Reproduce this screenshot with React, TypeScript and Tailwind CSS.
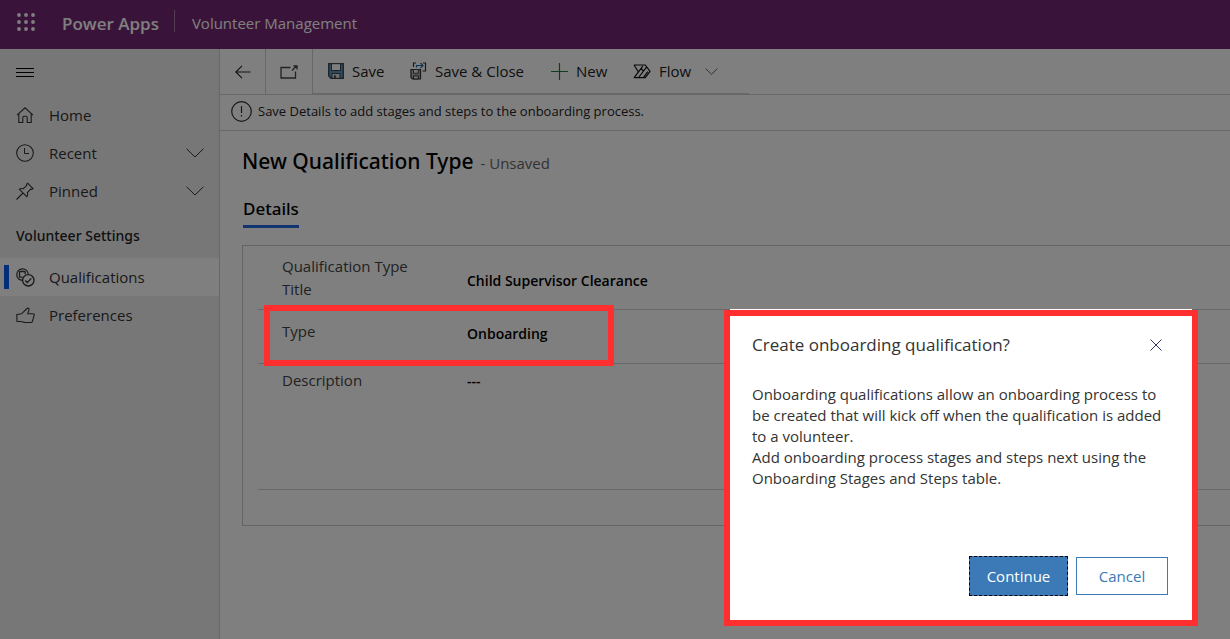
import React from "react";

type IconProps = { className?: string };

const WaffleIcon = () => (
  <svg width="18" height="18" viewBox="0 0 18 18" fill="currentColor" aria-hidden="true">
    {[2, 9, 16].map((y) =>
      [2, 9, 16].map((x) => <circle key={`${x}-${y}`} cx={x} cy={y} r="1.9" />)
    )}
  </svg>
);

const MenuIcon = () => (
  <svg width="18" height="11" viewBox="0 0 18 11" stroke="currentColor" aria-hidden="true">
    <path d="M0 1.5h18M0 5.5h18M0 9.5h18" />
  </svg>
);

const HomeIcon = () => (
  <svg width="18" height="18" viewBox="0 0 18 18" fill="none" stroke="currentColor" aria-hidden="true">
    <path d="M1 9.2 9 1.8l8 7.4M2.8 7.8v8.7h4v-5c0-.8.5-1.3 1.3-1.3h1.8c.8 0 1.3.5 1.3 1.3v5h4V7.8" strokeWidth="1.1" />
  </svg>
);

const ClockIcon = () => (
  <svg width="18" height="18" viewBox="0 0 18 18" fill="none" stroke="currentColor" aria-hidden="true">
    <circle cx="9" cy="9" r="8.3" strokeWidth="1.1" />
    <path d="M8.5 4v5.5H13" />
  </svg>
);

const PinIcon = () => (
  <svg width="18" height="18" viewBox="0 0 18 18" fill="none" stroke="currentColor" aria-hidden="true">
    <path d="M11.6 1.2 17 6.6l-1.4.8-.9-.2-3.3 3.5c.5 1.4.3 2.9-.6 4L3.4 7.3c1.2-.9 2.6-1 4-.6l3.4-3.3-.2-1ZM7 11 .5 17.5" strokeWidth="1.1" />
  </svg>
);

const ChevronIcon = ({ className }: IconProps) => (
  <svg className={className} viewBox="0 0 18 10" fill="none" stroke="currentColor" aria-hidden="true">
    <path d="m.5.7 8.5 8.3L17.5.7" />
  </svg>
);

const QualificationsIcon = () => (
  <svg width="19" height="19" viewBox="0 0 19 19" fill="none" stroke="currentColor" aria-hidden="true">
    <path d="M6.6 12.4A5.8 5.8 0 1 1 12.3 6.5" strokeWidth="1.2" />
    <path d="M6.5 9.2H4.2c-.4 0-.7-.3-.7-.7V4.2c0-.4.3-.7.7-.7h4.3c.4 0 .7.3.7.7v2" strokeWidth="1.3" />
    <circle cx="12.3" cy="12.3" r="5.7" strokeWidth="1.3" />
    <path d="m9.3 12.5 2 2 4-4.1" strokeWidth="1.3" />
  </svg>
);

const ThumbIcon = () => (
  <svg width="19" height="17" viewBox="0 0 19 17" fill="none" stroke="currentColor" aria-hidden="true">
    <path d="M.8 7.5 5.5 6.8 11 1.5c1-.9 2.3-.1 2 1.2L11.8 6.7h5.3c.9 0 1.3.6 1.1 1.4l-1.8 6.2c-.2.8-.8 1.2-1.6 1.2H9c-1.5 0-2.5-1-4-1H1Z" strokeWidth="1.1" />
  </svg>
);

const BackIcon = () => (
  <svg width="16" height="14" viewBox="0 0 16 14" fill="none" stroke="currentColor" aria-hidden="true">
    <path d="M15.5 7H1M7 .8.8 7 7 13.2" strokeWidth="1.1" />
  </svg>
);

const PopOutIcon = () => (
  <svg width="18" height="14" viewBox="0 0 18 14" fill="none" stroke="#444" aria-hidden="true">
    <path d="M10.5 2.5H1V13h14.500V6.500" strokeWidth="1.3" />
    <path d="m12 5.5 4.500-4.500M13.500 1H17v3.500" strokeWidth="1.3" />
  </svg>
);

const SaveIcon = () => (
  <svg width="16" height="16" viewBox="0 0 16 16" aria-hidden="true">
    <path d="M.7.7h14.6v14.6H3L.7 13Z" fill="#5f93bd" stroke="#3b444e" strokeWidth="1.3" />
    <path d="M3.5.7h9v6.8h-9Z" fill="#fff" stroke="#3b444e" />
    <path d="M4 10.5h8v4.8H4Z" fill="#ddd" stroke="#3b444e" />
    <path d="M6 12.3h1.8v3H6Z" fill="#3b444e" />
  </svg>
);

const SaveCloseIcon = () => (
  <svg width="17" height="18" viewBox="0 0 17 18" fill="none" aria-hidden="true">
    <path d="M6 1H3.5v4M13 1h2.5v8h-3" stroke="#333" strokeWidth="1.2" />
    <path d="M6.5 5.5v-2h6M10.5 1 13 3.5 10.5 6" stroke="#1f6fae" strokeWidth="1.2" />
    <path d="M1 7.5h9.5V17h-8L1 15.5Z" fill="#a9b2ba" stroke="#333" strokeWidth="1.2" />
    <path d="M3.5 7.5h4.8v3.8H3.5Z" fill="#e8e8e8" stroke="#444" />
    <path d="M3.5 13.8h4.8V17H3.5Z" fill="#ddd" stroke="#333" />
  </svg>
);

const PlusIcon = () => (
  <svg width="17" height="17" viewBox="0 0 17 17" stroke="#1f7a42" aria-hidden="true">
    <path d="M0 8.5h17M8.5 0v17" strokeWidth="1.2" />
  </svg>
);

const FlowIcon = () => (
  <svg width="18" height="15" viewBox="0 0 18 15" fill="none" stroke="#111" strokeLinejoin="round" aria-hidden="true">
    <path d="M1 1h11.3L17 7.3l-4.7 6.3H1.2L9.8 2.2M1 1l4.3 6.8M5.6 13.5l7.9-10.3M8.3 4.3l2.2 3M10.5 13.3l4.3-5.6" strokeWidth="1.2" />
  </svg>
);

const InfoIcon = () => (
  <svg width="21" height="21" viewBox="0 0 21 21" fill="none" stroke="#333" aria-hidden="true">
    <circle cx="10.5" cy="10.5" r="9.8" strokeWidth="1.2" />
    <path d="M10.5 5v7M10.5 14v1.5" strokeWidth="1.2" />
  </svg>
);

const CloseIcon = () => (
  <svg width="12" height="12" viewBox="0 0 12 12" stroke="currentColor" aria-hidden="true">
    <path d="m.5.5 11 11M11.5.5l-11 11" />
  </svg>
);

function NavItem({ icon, label, expandable, active }: { icon: React.ReactNode; label: string; expandable?: boolean; active?: boolean }) {
  return (
    <a
      href="#"
      className={`relative flex h-[38px] items-center pr-[15px] pl-4 text-[15px] text-[#333] ${active ? "bg-white" : ""}`}
    >
      {active && <span className="absolute top-[7px] left-1 h-6 w-[5px] bg-[#0b5cf0]" />}
      <span className="flex w-[33px] items-center">{icon}</span>
      <span className="flex-1">{label}</span>
      {expandable && <ChevronIcon className="h-[10px] w-[18px]" />}
    </a>
  );
}

function Sidebar() {
  return (
    <nav className="w-[220px] shrink-0 border-r border-[#d0d0d0] bg-[#efefef]">
      <button aria-label="Toggle navigation" className="flex h-[47px] items-center px-4 text-black">
        <MenuIcon />
      </button>
      <NavItem icon={<HomeIcon />} label="Home" />
      <NavItem icon={<ClockIcon />} label="Recent" expandable />
      <NavItem icon={<PinIcon />} label="Pinned" expandable />
      <h2 className="flex h-12 items-center px-4 pt-[2px] font-['Noto_Sans',sans-serif] text-[14px] font-medium text-[#222]">Volunteer Settings</h2>
      <NavItem icon={<QualificationsIcon />} label="Qualifications" active />
      <NavItem icon={<ThumbIcon />} label="Preferences" />
    </nav>
  );
}

function CommandBar() {
  return (
    <div className="flex h-[46px] border-b border-[#d0d0d0] text-[15px] text-[#222]">
      <button aria-label="Back" className="flex w-[46px] items-center justify-center border-r border-[#d0d0d0]">
        <BackIcon />
      </button>
      <button aria-label="Open in new window" className="flex w-[47px] items-center justify-center border-r border-[#d0d0d0]">
        <PopOutIcon />
      </button>
      <div className="flex w-[436px] border-b border-[#d0d0d0] pl-[15px]">
        <button className="flex w-[82px] items-center gap-2 whitespace-nowrap"><SaveIcon />Save</button>
        <button className="flex w-[141px] items-center gap-2 whitespace-nowrap"><SaveCloseIcon />Save &amp; Close</button>
        <button className="flex w-[82px] items-center gap-2 whitespace-nowrap"><PlusIcon />New</button>
        <button className="flex items-center gap-2 whitespace-nowrap">
          <FlowIcon />Flow
          <ChevronIcon className="ml-[6px] h-[7px] w-[13px]" />
        </button>
      </div>
    </div>
  );
}

function DetailsForm() {
  const label = "w-[185px] shrink-0 pr-12 text-[15px] leading-[23px] text-[#444]";
  const value = "min-w-0 flex-1 appearance-none resize-none bg-transparent text-[14px] font-semibold text-black outline-none";
  return (
    <form className="ml-[22px] h-[281px] border-y border-l border-[#c8c8c8] pl-[15px]">
      <div className="flex h-16 items-center border-b border-[#d0d0d0] pl-6">
        <label htmlFor="title" className={label}>Qualification Type Title</label>
        <input id="title" defaultValue="Child Supervisor Clearance" className={`${value} h-8 pt-[6px]`} />
      </div>
      <div className="relative flex h-[54px] items-center border-b border-[#d0d0d0] pl-6">
        <label htmlFor="type" className={`${label} pb-[10px]`}>Type</label>
        <select id="type" defaultValue="onboarding" className={`${value} h-8 pb-[6px]`}>
          <option value="onboarding">Onboarding</option>
        </select>
        <span className="pointer-events-none absolute -top-[5px] left-[6px] z-20 h-[61px] w-[350px] border-[6px] border-[#ff2f2f]" />
      </div>
      <div className="flex h-[126px] border-b border-[#d0d0d0] pt-[5px] pl-6">
        <label htmlFor="description" className={label}>Description</label>
        <textarea id="description" defaultValue="---" className={`${value} leading-[23px]`} />
      </div>
    </form>
  );
}

function OnboardingDialog() {
  return (
    <div
      role="dialog"
      aria-modal="true"
      aria-labelledby="dialog-title"
      className="absolute top-[310px] right-8 z-30 flex h-[316px] w-[474px] flex-col border-[6px] border-[#ff2f2f] bg-white px-[22px] text-[#333]"
    >
      <span className="absolute inset-x-0 -top-[7px] h-px bg-white" />
      <header className="flex items-center justify-between pt-[15px] pr-[8px]">
        <h2 id="dialog-title" className="text-[17px] leading-7">Create onboarding qualification?</h2>
        <button aria-label="Close" className="text-[#33336b]"><CloseIcon /></button>
      </header>
      <p className="mt-[25px] max-w-[415px] text-[15px] leading-[21px]">
        Onboarding qualifications allow an onboarding process to be created that will kick off when the qualification is added to a volunteer.
        <br />
        Add onboarding process stages and steps next using the Onboarding Stages and Steps table.
      </p>
      <footer className="mt-auto mb-6 flex items-center justify-end gap-2 pr-[2px] text-[15px]">
        <button className="h-10 w-[99px] border border-dashed border-black bg-[#3b79b7] text-white">Continue</button>
        <button className="h-[38px] w-[92px] border border-[#3b79b7] text-[#3b79b7]">Cancel</button>
      </footer>
    </div>
  );
}

export default function App() {
  return (
    <div className="relative flex min-h-screen flex-col overflow-hidden bg-white font-['Open_Sans','Noto_Sans',sans-serif]">
      <header className="flex h-[49px] items-center bg-[#742774] text-white">
        <button aria-label="App launcher" className="mb-[5px] ml-[17px]"><WaffleIcon /></button>
        <span className="ml-[27px] pb-[2px] text-[17px] font-semibold">Power Apps</span>
        <span className="mr-[17px] ml-[15px] mb-2 h-[22px] w-px bg-white/40" />
        <span className="pb-[2px] text-[15px]">Volunteer Management</span>
      </header>
      <div className="flex flex-1">
        <Sidebar />
        <main className="min-w-0 flex-1">
          <CommandBar />
          <div className="flex h-9 items-center gap-[6px] border-b border-[#d0d0d0] pb-[2px] pl-[11px] text-[13px] text-[#222]">
            <InfoIcon />
            <span>Save Details to add stages and steps to the onboarding process.</span>
          </div>
          <div className="flex items-baseline gap-[7px] pt-[15px] pl-[22px]">
            <h1 className="font-['Noto_Sans',sans-serif] text-[21px] leading-[30px] font-medium text-black">New Qualification Type</h1>
            <span className="text-[15px] leading-[30px] text-[#666]">- Unsaved</span>
          </div>
          <div className="mt-[18px] mb-[17px] flex pl-[23px]">
            <button className="h-[32px] border-b-[3px] border-[#2266e3] pb-1 font-['Noto_Sans',sans-serif] text-[17px] leading-6 font-medium text-black">Details</button>
          </div>
          <DetailsForm />
        </main>
      </div>
      <div className="absolute inset-0 z-10 bg-black/50" />
      <OnboardingDialog />
    </div>
  );
}
